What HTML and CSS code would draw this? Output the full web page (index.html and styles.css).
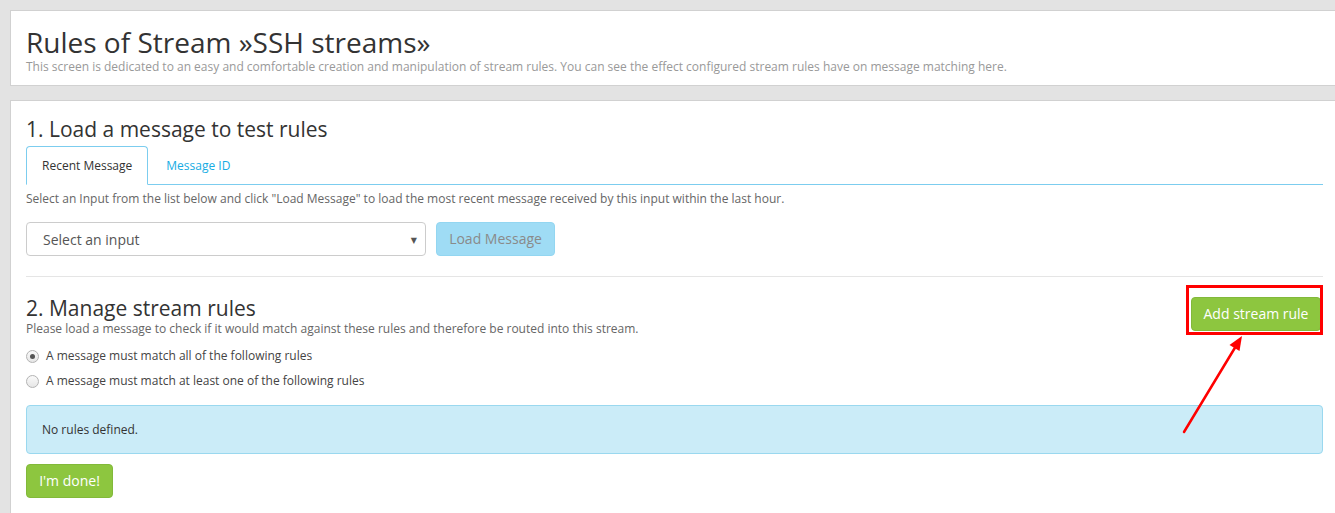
FILE: index.html
```html
<!DOCTYPE html>
<html>
<head>
<meta charset="utf-8">
<title>Rules of Stream</title>
<link rel="stylesheet" href="styles.css">
</head>
<body>
<div class="page">
  <div class="panel header-panel">
    <h1 class="page-title">Rules of Stream »SSH streams»</h1>
    <p class="page-desc">This screen is dedicated to an easy and comfortable creation and manipulation of stream rules. You can see the effect configured stream rules have on message matching here.</p>
  </div>

  <div class="panel main-panel">
    <h2 class="section-title">1. Load a message to test rules</h2>
    <ul class="tabs">
      <li class="tab active">Recent Message</li>
      <li class="tab"><a class="tab-link">Message ID</a></li>
    </ul>
    <p class="help">Select an Input from the list below and click "Load Message" to load the most recent message received by this input within the last hour.</p>
    <div class="load-row">
      <div class="select">
        <span class="select-text">Select an input</span>
        <span class="select-caret">▼</span>
      </div>
      <button class="btn btn-info-disabled">Load Message</button>
    </div>

    <hr class="divider">

    <div class="manage-row">
      <div class="manage-text">
        <h2 class="section-title tight">2. Manage stream rules</h2>
        <p class="help tight">Please load a message to check if it would match against these rules and therefore be routed into this stream.</p>
      </div>
      <div class="add-wrap">
        <button class="btn btn-success btn-add">Add stream rule</button>
        <span class="annot-box"></span>
        <svg class="annot-arrow" width="70" height="104" viewBox="0 0 70 104">
          <line x1="5" y1="99" x2="57" y2="13" stroke="#ff0000" stroke-width="2.5" stroke-linecap="round"/>
          <polygon points="63,3 60.5,18 50.5,12" fill="#ff0000"/>
        </svg>
      </div>
    </div>

    <div class="radios">
      <label class="radio-row"><span class="radio checked"></span>A message must match all of the following rules</label>
      <label class="radio-row"><span class="radio"></span>A message must match at least one of the following rules</label>
    </div>

    <div class="alert">No rules defined.</div>

    <button class="btn btn-success btn-done">I'm done!</button>
  </div>
</div>
</body>
</html>
```

FILE: styles.css
```css
html, body {
  margin: 0;
  padding: 0;
  overflow: hidden;
  background: #e3e3e3;
}
body {
  font-family: "Open Sans", "DejaVu Sans", sans-serif;
  color: #333;
}
.page {
  box-sizing: border-box;
  padding: 10px 0 0 10px;
  width: 1335px;
  height: 513px;
  overflow: hidden;
}
.panel {
  background: #fff;
  border: 1px solid #d1d1d1;
  width: 1297px;
  padding: 0 15px;
  flex-shrink: 0;
}
.header-panel {
  padding-top: 14px;
  padding-bottom: 10px;
}
.page-title {
  font-size: 28px;
  font-weight: 400;
  line-height: 34px;
  margin: 0;
  color: #333;
}
.page-desc {
  font-size: 12px;
  line-height: 16px;
  margin: 0;
  color: #999;
}
.main-panel {
  margin-top: 14px;
  padding-top: 15px;
  padding-bottom: 30px;
}
.section-title {
  font-size: 21px;
  font-weight: 400;
  line-height: 26px;
  margin: 0;
  color: #333;
}
.section-title.tight {
  line-height: 22px;
}
.tabs {
  list-style: none;
  margin: 4px 0 0 0;
  padding: 0;
  display: flex;
  border-bottom: 1px solid #7ccdef;
  height: 38px;
}
.tab {
  font-size: 12px;
  line-height: 16px;
  padding: 11px 15px 10px;
  margin-bottom: -1px;
  border: 1px solid transparent;
  border-radius: 4px 4px 0 0;
}
.tab.active {
  border-color: #7ccdef;
  border-bottom-color: #fff;
  background: #fff;
  color: #333;
  padding-bottom: 11px;
}
.tab-link {
  color: #16ace3;
  padding: 0 2px;
}
.help {
  font-size: 12px;
  line-height: 16px;
  margin: 6px 0 0 0;
  color: #666;
}
.help.tight {
  margin-top: 2px;
}
.load-row {
  display: flex;
  gap: 10px;
  margin-top: 15px;
}
.select {
  box-sizing: border-box;
  width: 400px;
  height: 34px;
  border: 1px solid #ccc;
  border-radius: 4px;
  display: flex;
  align-items: center;
  justify-content: space-between;
  padding: 0 8px 0 16px;
}
.select-text {
  font-size: 14px;
  color: #555;
}
.select-caret {
  font-size: 8px;
  color: #555;
}
.btn {
  font-family: "Open Sans", "DejaVu Sans", sans-serif;
  font-size: 14px;
  line-height: 20px;
  padding: 6px 12px;
  border-radius: 4px;
  border: 1px solid transparent;
  cursor: pointer;
}
.btn-info-disabled {
  background: #9fdcf5;
  border-color: #93d6f1;
  color: #8a8a8a;
  width: 119px;
  height: 34px;
  padding: 0;
}
.btn-success {
  background: #8dc63f;
  border-color: #82b93a;
  color: #fff;
}
.divider {
  border: 0;
  border-top: 1px solid #e5e5e5;
  margin: 20px 0 0 0;
}
.manage-row {
  display: flex;
  justify-content: space-between;
  align-items: flex-start;
  margin-top: 20px;
}
.add-wrap {
  position: relative;
  margin-right: 2px;
}
.btn-add {
  width: 130px;
  height: 34px;
  padding: 0;
  display: block;
}
.annot-box {
  position: absolute;
  left: -5px;
  top: -12px;
  right: -2px;
  bottom: -4px;
  border: 3px solid #ff0000;
  pointer-events: none;
}
.annot-arrow {
  position: absolute;
  left: -12px;
  top: 36px;
  pointer-events: none;
}
.radios {
  margin-top: 9px;
  display: flex;
  flex-direction: column;
  gap: 5px;
}
.radio-row {
  display: flex;
  align-items: center;
  font-size: 12px;
  line-height: 20px;
  color: #444;
}
.radio {
  box-sizing: border-box;
  width: 13px;
  height: 13px;
  border-radius: 50%;
  border: 1px solid #b3b3b3;
  background: linear-gradient(#fafafa, #e6e6e6);
  margin-right: 7px;
  display: flex;
  align-items: center;
  justify-content: center;
}
.radio.checked::after {
  content: "";
  width: 5px;
  height: 5px;
  border-radius: 50%;
  background: #555;
}
.alert {
  margin-top: 14px;
  background: #cbecf8;
  border: 1px solid #9ad8ef;
  border-radius: 4px;
  padding: 15px;
  font-size: 12px;
  line-height: 17px;
  color: #333;
}
.btn-done {
  margin-top: 10px;
  width: 87px;
  height: 34px;
  padding: 0;
}
```
